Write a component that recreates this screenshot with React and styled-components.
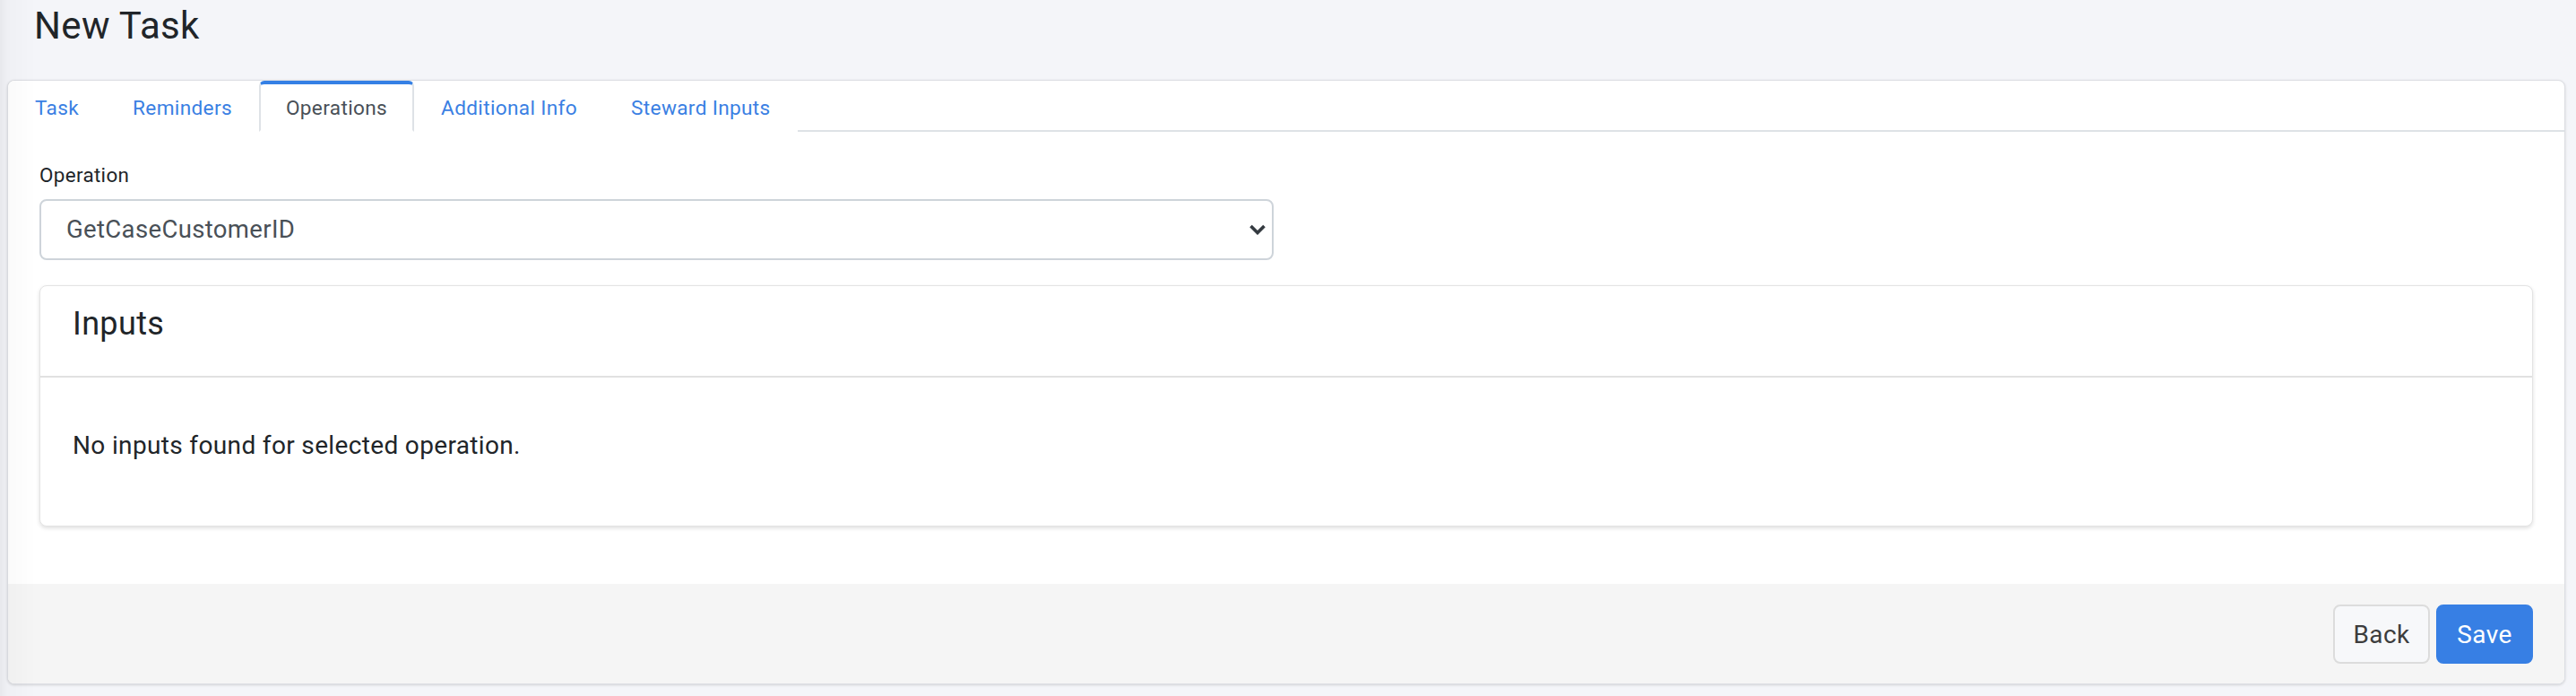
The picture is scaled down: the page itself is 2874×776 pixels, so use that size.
import React from "react";
import styled, { createGlobalStyle } from "styled-components";

const GlobalStyle = createGlobalStyle`
  html, body {
    margin: 0;
    padding: 0;
    background: #f4f5f9;
    font-family: Roboto, "Liberation Sans", Arial, sans-serif;
    letter-spacing: 0.35px;
    color: #212529;
  }
  * { box-sizing: border-box; }
  button, select { letter-spacing: inherit; }
`;

const Page = styled.div`
  position: relative;
  padding: 0 12px 14px 8px;
`;

const EdgeShade = styled.div`
  position: fixed;
  left: 0;
  top: 0;
  bottom: 0;
  width: 40px;
  pointer-events: none;
  background: linear-gradient(to right, rgba(0, 0, 0, 0.05), rgba(0, 0, 0, 0.018) 20%, rgba(0, 0, 0, 0));
`;

const Title = styled.h1`
  margin: 0 0 35px;
  padding: 4px 30px 0;
  font-size: 42px;
  line-height: 1.2;
  font-weight: 400;
  color: #212529;
`;

const Card = styled.div`
  background: #fff;
  border: 1px solid #dcdee3;
  border-radius: 8px;
  box-shadow: 0 1px 3px rgba(0, 0, 0, 0.14);
  overflow: hidden;
`;

const TabBar = styled.div`
  display: flex;
  border-bottom: 2px solid #dee2e6;
`;

const Tab = styled.button`
  font-family: inherit;
  font-size: 22.6px;
  line-height: 1.5;
  background: #fff;
  cursor: pointer;
  margin: 0 0 -2px;
  padding: 10px 28px 7px;
  border: 2px solid ${(p) => (p.$active ? "#dee2e6" : "transparent")};
  border-top: 4px solid ${(p) => (p.$active ? "#3580e5" : "transparent")};
  border-bottom-color: ${(p) => (p.$active ? "#fff" : "transparent")};
  border-radius: 6px 6px 0 0;
  color: ${(p) => (p.$active ? "#495057" : "#3a80e3")};
`;

const Body = styled.div`
  padding: 32px 35px 64px;
`;

const Label = styled.label`
  display: block;
  font-size: 22.4px;
  line-height: 1.5;
  margin-bottom: 9px;
  color: #212529;
`;

const SelectWrap = styled.div`
  position: relative;
  width: calc(50% - 14px);
  margin-bottom: 28px;
`;

const Select = styled.select`
  appearance: none;
  -webkit-appearance: none;
  width: 100%;
  height: 68px;
  padding: 0 60px 0 28px;
  border: 2px solid #ced4da;
  border-radius: 8px;
  background: #fff;
  font-family: inherit;
  font-size: 27.5px;
  color: #495057;
  outline: none;
`;

const Chevron = styled.svg`
  position: absolute;
  right: 8px;
  top: 50%;
  transform: translateY(-50%);
  pointer-events: none;
`;

const InnerCard = styled.section`
  background: #fff;
  border: 1px solid #e4e4e4;
  border-radius: 8px;
  box-shadow: 0 2px 4px rgba(0, 0, 0, 0.13);
`;

const InnerHeader = styled.div`
  padding: 21px 36px 36px;
  border-bottom: 2px solid #e1e1e1;
`;

const InnerTitle = styled.h5`
  margin: 0;
  font-size: 36px;
  line-height: 1.2;
  font-weight: 400;
  color: #212529;
`;

const InnerBody = styled.div`
  padding: 55px 36px 68px;
`;

const Message = styled.p`
  margin: 0;
  font-size: 28px;
  line-height: 1.5;
  color: #212529;
`;

const Footer = styled.div`
  display: flex;
  justify-content: flex-end;
  gap: 7px;
  padding: 23px 35px 22px;
  background: #f5f5f5;
`;

const Button = styled.button`
  width: 108px;
  height: 66px;
  font-family: inherit;
  font-size: 28px;
  border-radius: 8px;
  cursor: pointer;
  border: 2px solid ${(p) => (p.$primary ? "#377fe4" : "#dcdcdc")};
  background: ${(p) => (p.$primary ? "#377fe4" : "#f7f8fa")};
  color: ${(p) => (p.$primary ? "#fff" : "#3d3d3d")};
`;

const tabs = ["Task", "Reminders", "Operations", "Additional Info", "Steward Inputs"];

export default function App() {
  return (
    <>
      <GlobalStyle />
      <Page>
        <EdgeShade />
        <Title>New Task</Title>
        <Card>
          <TabBar>
            {tabs.map((t) => (
              <Tab key={t} $active={t === "Operations"}>
                {t}
              </Tab>
            ))}
          </TabBar>
          <Body>
            <Label htmlFor="operation">Operation</Label>
            <SelectWrap>
              <Select id="operation" defaultValue="GetCaseCustomerID">
                <option>GetCaseCustomerID</option>
              </Select>
              <Chevron width="20" height="12" viewBox="0 0 20 12">
                <path d="M2.5 2 L10 9.5 L17.5 2" fill="none" stroke="#343a40" strokeWidth="3.6" />
              </Chevron>
            </SelectWrap>
            <InnerCard>
              <InnerHeader>
                <InnerTitle>Inputs</InnerTitle>
              </InnerHeader>
              <InnerBody>
                <Message>No inputs found for selected operation.</Message>
              </InnerBody>
            </InnerCard>
          </Body>
          <Footer>
            <Button>Back</Button>
            <Button $primary>Save</Button>
          </Footer>
        </Card>
      </Page>
    </>
  );
}
